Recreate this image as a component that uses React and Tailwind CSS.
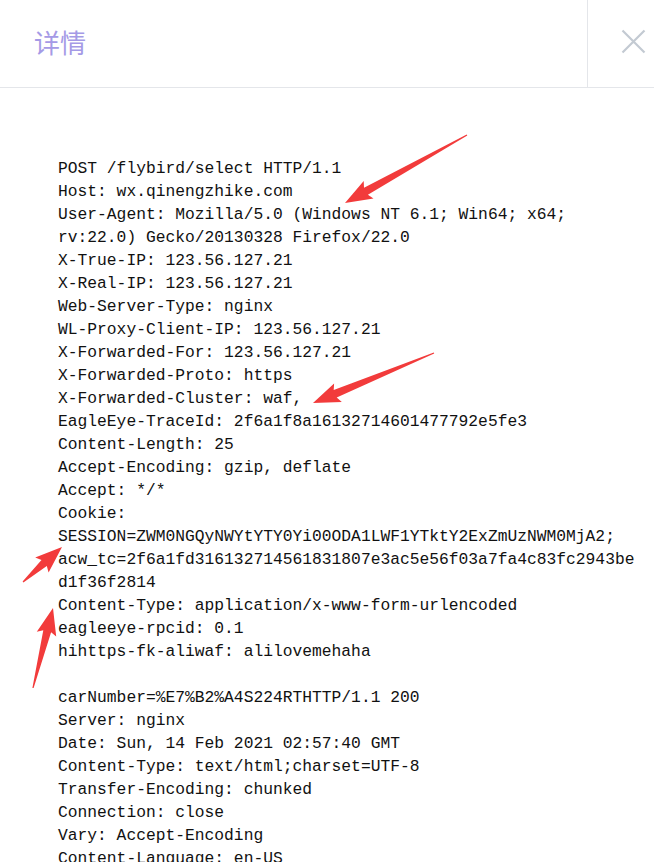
const lines = [
  'POST /flybird/select HTTP/1.1',
  'Host: wx.qinengzhike.com',
  'User-Agent: Mozilla/5.0 (Windows NT 6.1; Win64; x64;',
  'rv:22.0) Gecko/20130328 Firefox/22.0',
  'X-True-IP: 123.56.127.21',
  'X-Real-IP: 123.56.127.21',
  'Web-Server-Type: nginx',
  'WL-Proxy-Client-IP: 123.56.127.21',
  'X-Forwarded-For: 123.56.127.21',
  'X-Forwarded-Proto: https',
  'X-Forwarded-Cluster: waf,',
  'EagleEye-TraceId: 2f6a1f8a16132714601477792e5fe3',
  'Content-Length: 25',
  'Accept-Encoding: gzip, deflate',
  'Accept: */*',
  'Cookie:',
  'SESSION=ZWM0NGQyNWYtYTY0Yi00ODA1LWF1YTktY2ExZmUzNWM0MjA2;',
  'acw_tc=2f6a1fd316132714561831807e3ac5e56f03a7fa4c83fc2943be',
  'd1f36f2814',
  'Content-Type: application/x-www-form-urlencoded',
  'eagleeye-rpcid: 0.1',
  'hihttps-fk-aliwaf: alilovemehaha',
  '',
  'carNumber=%E7%B2%A4S224RTHTTP/1.1 200',
  'Server: nginx',
  'Date: Sun, 14 Feb 2021 02:57:40 GMT',
  'Content-Type: text/html;charset=UTF-8',
  'Transfer-Encoding: chunked',
  'Connection: close',
  'Vary: Accept-Encoding',
  'Content-Language: en-US',
]

// annotation arrows: [tail, tip]
const arrows = [
  [[467, 135], [345, 203]],
  [[434, 353], [313, 403]],
  [[23, 582], [62, 547]],
  [[33, 688], [53, 608]],
]

const arrowPoints = ([tx, ty], [px, py]) => {
  const dx = px - tx
  const dy = py - ty
  const len = Math.hypot(dx, dy)
  const ux = dx / len
  const uy = dy / len
  const nx = -uy
  const ny = ux
  const headLen = 24
  const bx = px - ux * headLen
  const by = py - uy * headLen
  const pts = [
    [tx + nx * 0.6, ty + ny * 0.6],
    [bx + nx * 4, by + ny * 4],
    [bx - ux * 3 + nx * 10, by - uy * 3 + ny * 10],
    [px, py],
    [bx - ux * 3 - nx * 10, by - uy * 3 - ny * 10],
    [bx - nx * 4, by - ny * 4],
    [tx - nx * 0.6, ty - ny * 0.6],
  ]
  return pts.map(p => p[0].toFixed(1) + ',' + p[1].toFixed(1)).join(' ')
}

const App = () => {
  return (
    <div className="relative w-[654px] h-[862px] overflow-hidden bg-white">
      <div className="flex h-[88px] border-b border-[#e4e6ea]">
        <div className="flex-1 flex items-center pl-[34px] pb-[4px]">
          <span className="text-[26px] text-[#a59ae6] font-['Noto_Sans_CJK_SC',sans-serif]">详情</span>
        </div>
        <div className="w-[67px] border-l border-[#e4e6ea] flex items-center pl-[33px] pb-[5px]">
          <svg width="25" height="25" viewBox="0 0 25 25" fill="none" stroke="#c3cad2" strokeWidth="2.2">
            <path d="M1.5 1.5 L23.5 23.5 M23.5 1.5 L1.5 23.5" />
          </svg>
        </div>
      </div>

      <pre className="pl-[58px] pt-[69px] text-[16.3px] leading-[23px] text-[#111111] font-['Liberation_Mono',monospace] whitespace-pre">
        {lines.map((l, i) => (
          <div key={i} className="h-[23px]">{l}</div>
        ))}
      </pre>

      <svg className="absolute inset-0 pointer-events-none" width="654" height="862">
        {arrows.map((a, i) => (
          <polygon key={i} points={arrowPoints(a[0], a[1])} fill="#f23b3b" />
        ))}
      </svg>
    </div>
  )
}

export default App
